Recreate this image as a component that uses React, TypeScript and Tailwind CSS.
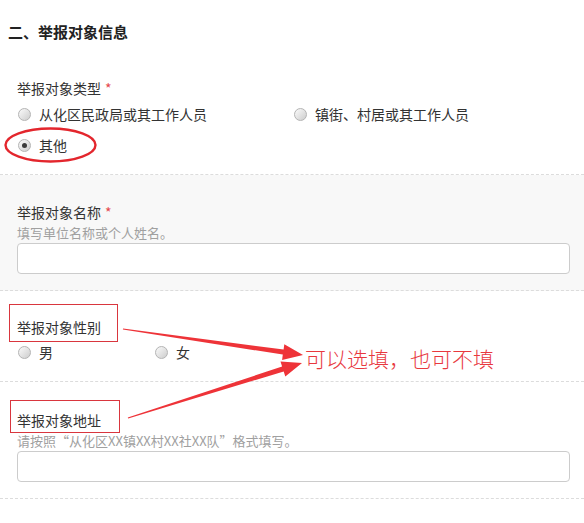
import React from "react";

const FONT = '"Noto Sans CJK SC", "Microsoft YaHei", sans-serif';

function Radio({ checked = false }: { checked?: boolean }) {
  return (
    <span className="relative inline-flex h-[13px] w-[13px] shrink-0 items-center justify-center rounded-full border border-[#b4b4b4] bg-linear-to-br from-[#fbfbfb] to-[#cdcdcd]">
      {checked && <span className="h-[5px] w-[5px] rounded-full bg-[#3a3a3a]" />}
    </span>
  );
}

function Option({ label, checked, width }: { label: string; checked?: boolean; width: string }) {
  return (
    <div className={`flex h-[24px] items-center gap-[8px] pl-[1px] ${width}`}>
      <Radio checked={checked} />
      <span className="text-[14px] text-[#333]">{label}</span>
    </div>
  );
}

function Label({ text, required }: { text: string; required?: boolean }) {
  return (
    <div className="text-[14px] leading-[22px] text-[#333]">
      {text}
      {required && <span className="ml-[4px] text-[#e5484d]">*</span>}
    </div>
  );
}

export default function App() {
  return (
    <div
      className="relative h-[523px] w-[584px] overflow-hidden bg-white"
      style={{ fontFamily: FONT }}
    >
      <div className="pl-[8px] pt-[22px] pb-[9px] text-[15px] font-bold leading-[20px] text-[#222]">
        二、举报对象信息
      </div>

      <div className="border-b border-dashed border-[#dcdcdc] px-[17px] pt-[26px] pb-[17px]">
        <Label text="举报对象类型" required />
        <div className="mt-[3px] flex">
          <Option label="从化区民政局或其工作人员" width="w-[276px]" />
          <Option label="镇街、村居或其工作人员" width="w-[260px]" />
        </div>
        <div className="mt-[7px] flex">
          <Option label="其他" checked width="w-[200px]" />
        </div>
      </div>

      <div className="border-b border-dashed border-[#dcdcdc] bg-[#f8f8f8] px-[17px] pt-[26px] pb-[16px]">
        <Label text="举报对象名称" required />
        <div className="text-[13px] leading-[20px] text-[#a0a0a0]">填写单位名称或个人姓名。</div>
        <div className="h-[31px] w-[553px] rounded-[4px] border border-[#cccccc] bg-white" />
      </div>

      <div className="border-b border-dashed border-[#dcdcdc] px-[17px] pt-[25px] pb-[17px]">
        <Label text="举报对象性别" />
        <div className="mt-[2px] flex">
          <Option label="男" width="w-[137px]" />
          <Option label="女" width="w-[137px]" />
        </div>
      </div>

      <div className="border-b border-dashed border-[#dcdcdc] px-[17px] pt-[27px] pb-[16px]">
        <Label text="举报对象地址" />
        <div className="text-[13px] leading-[20px] text-[#a0a0a0]">
          请按照“从化区XX镇XX村XX社XX队”格式填写。
        </div>
        <div className="h-[31px] w-[553px] rounded-[4px] border border-[#cccccc] bg-white" />
      </div>

      <svg
        className="pointer-events-none absolute left-0 top-0"
        width="584"
        height="523"
        viewBox="0 0 584 523"
      >
        <ellipse cx="50.5" cy="145" rx="45" ry="16.5" fill="none" stroke="#e3262d" strokeWidth="2.4" />
        <rect x="9.5" y="304.5" width="108" height="37" fill="none" stroke="#d9363e" strokeWidth="1" />
        <rect x="10.5" y="400.5" width="109" height="32" fill="none" stroke="#d9363e" strokeWidth="1" />
        <polygon
          fill="#ee3338"
          points="123,328.4 283.6,349.6 284.3,344.2 303,355 282.1,360 282.8,354.6 122.9,329.6"
        />
        <polygon
          fill="#ee3338"
          points="127.8,417.4 282.1,366.6 280.5,361.4 302,363 285.3,376.6 283.7,371.4 128.2,418.6"
        />
      </svg>
      <div className="pointer-events-none absolute left-[305px] top-[345px] text-[21px] font-light leading-[26px] text-[#e8383e]">
        可以选填，也可不填
      </div>
    </div>
  );
}
